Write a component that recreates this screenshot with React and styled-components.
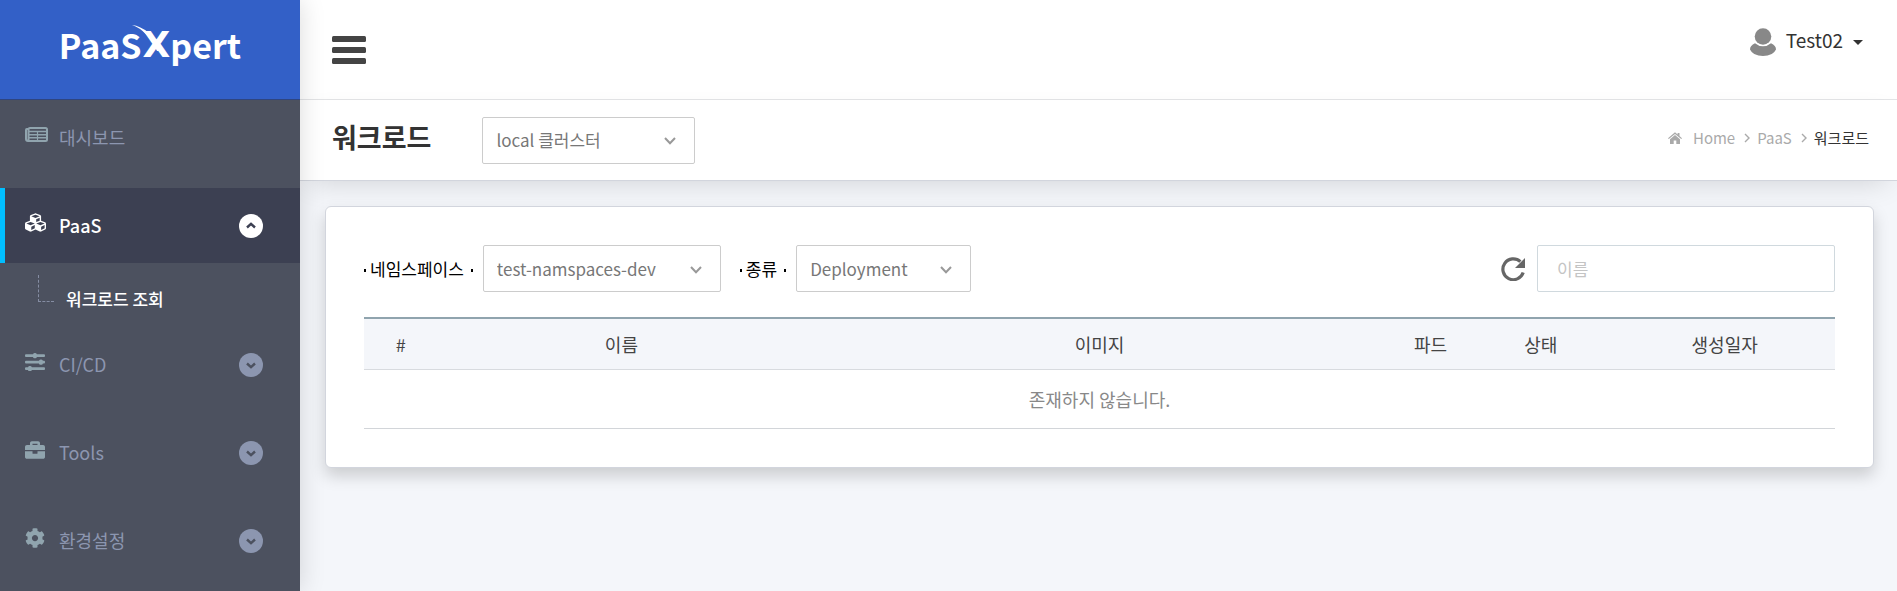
import React from "react";
import styled, { createGlobalStyle, css } from "styled-components";
import { FaBriefcase, FaCog, FaCubes } from "react-icons/fa";

const GlobalStyle = createGlobalStyle`
  *, *::before, *::after { box-sizing: border-box; }
  body {
    margin: 0;
    background: #f4f6fa;
    color: #333;
    font-family: "Noto Sans CJK KR", "Noto Sans", sans-serif;
    font-size: 17px;
    line-height: 24px;
  }
  button, input, select { font: inherit; color: inherit; }
  a { color: inherit; text-decoration: none; }
  ul, ol { margin: 0; padding: 0; list-style: none; }
`;

const Layout = styled.div`
  display: flex;
  min-height: 100vh;
`;

const Sidebar = styled.aside`
  position: relative;
  z-index: 1;
  flex: 0 0 300px;
  background: #4c515f;
  box-shadow: 0 0 24px rgba(0, 0, 0, 0.15);
`;

const Logo = styled.a`
  display: flex;
  justify-content: center;
  height: 100px;
  padding-top: 20px;
  border-bottom: 1px solid #2f4580;
  background: #3360c7;
  color: #fff;
  font-size: 34px;
  font-weight: 700;
  line-height: 50px;
`;

const LogoX = styled.span`
  position: relative;
  margin: 0 0 0 1px;
  font-family: "DejaVu Sans", sans-serif;
  font-size: 36px;
  font-weight: 700;
`;

const Swoosh = styled.svg`
  position: absolute;
  left: -11px;
  top: 4px;
  width: 32px;
  height: 30px;
`;

const MenuItem = styled.li`
  margin-bottom: 13px;
`;

const MenuLink = styled.a`
  display: flex;
  align-items: center;
  height: 75px;
  padding: 0 37px 0 20px;
  border-left: 5px solid transparent;
  color: #8c96b0;
  font-size: 18px;
  ${(p) =>
    p.$active &&
    css`
      border-left-color: #00bfff;
      background: #3c4052;
      color: #fff;
      font-weight: 500;
    `}
`;

const MenuIcon = styled.span`
  display: flex;
  width: 34px;
  padding-bottom: 6px;
  color: ${(p) => (p.$active ? "#fff" : "#90a4ae")};
  svg { display: block; }
`;

const MenuLabel = styled.span`
  padding-bottom: 2px;
`;

const Toggle = styled.svg`
  width: 24px;
  height: 24px;
  margin-left: auto;
`;

const SubMenu = styled.ul`
  padding: 12px 0 0 38px;
`;

const SubItem = styled.li`
  display: flex;
  height: 39px;
  color: #fff;
  font-size: 17px;
  font-weight: 500;
`;

const Branch = styled.span`
  width: 16px;
  height: 27px;
  margin-right: 12px;
  border: dashed #858da3;
  border-width: 0 0 1px 1px;
`;

const SubLink = styled.a`
  padding-top: 12px;
`;

const Main = styled.main`
  flex: 1;
  min-width: 0;
`;

const TopBar = styled.header`
  display: flex;
  justify-content: space-between;
  height: 100px;
  padding: 0 34px 0 32px;
  border-bottom: 1px solid #e4e5e7;
  background: #fff;
`;

const PlainButton = styled.button`
  display: flex;
  align-items: center;
  padding: 0;
  border: 0;
  background: none;
  cursor: pointer;
`;

const UserButton = styled(PlainButton)`
  align-self: flex-start;
  padding-top: 28px;
  color: #333;
  font-size: 19px;
`;

const UserName = styled.span`
  margin: 0 10px;
  padding-bottom: 4px;
`;

const PageHeader = styled.div`
  display: flex;
  align-items: center;
  height: 81px;
  padding: 0 28px 0 32px;
  border-bottom: 1px solid #d2d5dd;
  background: #fff;
  box-shadow: 0 10px 30px -10px rgba(0, 0, 0, 0.16);
`;

const Title = styled.h1`
  margin: 0 51px 6px 0;
  font-size: 27px;
  font-weight: 700;
  line-height: 40px;
`;

const SelectBox = styled.span`
  position: relative;
  flex: none;
  width: ${(p) => p.$width}px;
  svg {
    position: absolute;
    right: 19px;
    top: 50%;
    margin-top: -3px;
    pointer-events: none;
  }
  select {
    display: block;
    width: 100%;
    height: 47px;
    padding: 0 40px 0 13px;
    border: 1px solid #ccc;
    border-radius: 2px;
    background: #fff;
    color: #777;
    appearance: none;
  }
`;

const Crumbs = styled.ol`
  display: flex;
  align-items: center;
  margin-left: auto;
  padding-bottom: 5px;
  color: #aaa;
  font-size: 15px;
`;

const Crumb = styled.li`
  display: flex;
  align-items: center;
  gap: 9px;
  color: ${(p) => (p.$current ? "#333" : "inherit")};
  a { display: flex; align-items: center; gap: 11px; }
  svg { display: block; }
  & + & { margin-left: 7px; }
`;

const Card = styled.section`
  margin: 25px 23px 25px 25px;
  padding: 38px;
  border: 1px solid #d2d5dd;
  border-radius: 6px;
  background: #fff;
  box-shadow: 0 8px 16px rgba(0, 0, 0, 0.17);
`;

const Filters = styled.div`
  display: flex;
  align-items: center;
  margin-bottom: 25px;
`;

const FilterLabel = styled.label`
  display: flex;
  align-items: center;
  margin-right: 10px;
  color: #000;
  font-size: 17px;
  &::before, &::after {
    content: "";
    width: 2px;
    height: 3px;
    margin: 4px 0 0;
    background: currentColor;
  }
  &::before { margin-right: 4px; }
  &::after { margin-left: 7px; }
`;

const Spacer = styled.span`
  width: 19px;
`;

const Search = styled.div`
  display: flex;
  align-items: center;
  gap: 12px;
  margin-left: auto;
  input {
    width: 298px;
    height: 47px;
    padding: 0 19px;
    border: 1px solid #d0d9de;
    border-radius: 2px;
    outline: 0;
  }
  input::placeholder { color: #c4c4c4; opacity: 1; }
`;

const Table = styled.table`
  width: 100%;
  border-collapse: collapse;
  table-layout: fixed;
  font-size: 18px;
  text-align: center;
  th {
    height: 51px;
    padding: 0;
    border-top: 2px solid #90a4ae;
    border-bottom: 1px solid #d8dbdf;
    background: #f4f6fa;
    color: #444;
    font-weight: 400;
  }
  td {
    height: 59px;
    padding: 0;
    border-bottom: 1px solid #d2d5d9;
    color: #888;
  }
`;

const DashboardIcon = () => (
  <svg width="23" height="15" viewBox="0 0 23 15" fill="none" stroke="currentColor">
    <path d="M3.500 2H1.800Q1 2 1 3V12Q1 14 3 14H20.500Q22 14 22 12.500V2.500Q22 1 20.500 1H5Q3.500 1 3.500 2.500V13" strokeWidth="2" />
    <path d="M4 4.500H21M4 7.700H21M4 10.700H21" strokeWidth="1.400" />
    <path d="M12.500 5V13" strokeWidth="1.200" />
  </svg>
);

const SlidersIcon = () => (
  <svg width="20" height="18" viewBox="0 0 20 18" fill="currentColor">
    {[[2, 10], [8.5, 16], [15, 5]].map(([y, x]) => (
      <g key={y}>
        <rect x="0" y={y - 0.7} width="20" height="2.800" rx="1" />
        <rect x={x - 2} y={y - 2} width="3.800" height="5.200" rx="1.500" />
      </g>
    ))}
  </svg>
);

const ToggleIcon = ({ open }) => (
  <Toggle viewBox="0 0 24 24" fill="none" aria-hidden="true">
    <circle cx="12" cy="12" r="12" fill={open ? "#fff" : "#8c96b0"} />
    <path d={open ? "M8 13.500L12 9.800L16 13.500" : "M8 10.500L12 14.200L16 10.500"} stroke={open ? "#3c4052" : "#4c515f"} strokeWidth="2.400" />
  </Toggle>
);

const ChevronDown = () => (
  <svg width="12" height="8" viewBox="0 0 12 8" fill="none" aria-hidden="true">
    <path d="M1 1L6 6.300L11 1" stroke="#999" strokeWidth="2" />
  </svg>
);

const ChevronRight = () => (
  <svg width="6" height="10" viewBox="0 0 6 10" fill="none" aria-hidden="true">
    <path d="M1 1L5 5L1 9" stroke="currentColor" strokeWidth="1.400" />
  </svg>
);

const HomeIcon = () => (
  <svg width="14" height="12" viewBox="0 0 14 12" fill="currentColor" aria-hidden="true">
    <path d="M7 0.300L9.600 2.500V1H11.500V4.100L14 6.200L13.200 7.100L7 1.900L0.800 7.100L0 6.200Z" />
    <path d="M2 7.200L7 3L12 7.200V12H8.300V8.400H5.700V12H2Z" />
  </svg>
);

const MenuBars = () => (
  <svg width="34" height="28" viewBox="0 0 34 28" fill="#444" aria-hidden="true">
    <rect width="34" height="6" rx="1.500" />
    <rect y="11" width="34" height="6" rx="1.500" />
    <rect y="22" width="34" height="6" rx="1.500" />
  </svg>
);

const UserIcon = () => (
  <svg width="26" height="28" viewBox="0 0 26 28" fill="#888" aria-hidden="true">
    <circle cx="13" cy="8.500" r="8.300" />
    <path d="M5 15.300Q8.500 18.300 13 18.300Q17.500 18.300 21 15.300Q26 17.500 26 21.500Q23 28 13 28Q3 28 0 21.500Q0 17.500 5 15.300Z" />
  </svg>
);

const RefreshIcon = () => (
  <svg width="24" height="24" viewBox="0 0 24 24" fill="none" aria-hidden="true">
    <path d="M22.200 15.500A10.400 10.400 0 1 1 19.400 4.700" stroke="#666" strokeWidth="3.200" />
    <path d="M24 1V11H14Z" fill="#666" />
  </svg>
);

const menu = [
  { label: "대시보드", icon: <DashboardIcon /> },
  { label: "PaaS", icon: <FaCubes size={21} />, active: true, toggle: true, children: ["워크로드 조회"] },
  { label: "CI/CD", icon: <SlidersIcon />, toggle: true },
  { label: "Tools", icon: <FaBriefcase size={20} />, toggle: true },
  { label: "환경설정", icon: <FaCog size={20} />, toggle: true },
];

const columns = [
  ["#", "5%"],
  ["이름", "25%"],
  ["이미지", "40%"],
  ["파드", "5%"],
  ["상태", "10%"],
  ["생성일자", "15%"],
];

const Select = ({ id, width, label, option }) => (
  <SelectBox $width={width}>
    <select id={id} aria-label={label}>
      <option>{option}</option>
    </select>
    <ChevronDown />
  </SelectBox>
);

export default function App() {
  return (
    <>
      <GlobalStyle />
      <Layout>
        <Sidebar>
          <Logo href="#">
            <span>PaaS</span>
            <LogoX>
              X
              <Swoosh viewBox="0 0 32 30" aria-hidden="true">
                <path d="M0 1Q17 3 31 27L25 27Q15 6 0 1Z" fill="#fff" />
              </Swoosh>
            </LogoX>
            <span>pert</span>
          </Logo>
          <nav>
            <ul>
              {menu.map((item) => (
                <MenuItem key={item.label}>
                  <MenuLink href="#" $active={item.active}>
                    <MenuIcon $active={item.active}>{item.icon}</MenuIcon>
                    <MenuLabel>{item.label}</MenuLabel>
                    {item.toggle && <ToggleIcon open={item.active} />}
                  </MenuLink>
                  {item.children && (
                    <SubMenu>
                      {item.children.map((child) => (
                        <SubItem key={child}>
                          <Branch />
                          <SubLink href="#">{child}</SubLink>
                        </SubItem>
                      ))}
                    </SubMenu>
                  )}
                </MenuItem>
              ))}
            </ul>
          </nav>
        </Sidebar>
        <Main>
          <TopBar>
            <PlainButton aria-label="메뉴">
              <MenuBars />
            </PlainButton>
            <UserButton>
              <UserIcon />
              <UserName>Test02</UserName>
              <svg width="10" height="5" viewBox="0 0 10 5" aria-hidden="true">
                <path d="M0 0H10L5 5Z" fill="#333" />
              </svg>
            </UserButton>
          </TopBar>
          <PageHeader>
            <Title>워크로드</Title>
            <Select id="cluster" label="클러스터" width={213} option="local 클러스터" />
            <Crumbs>
              <Crumb>
                <a href="#"><HomeIcon />Home</a>
                <ChevronRight />
              </Crumb>
              <Crumb>
                <a href="#">PaaS</a>
                <ChevronRight />
              </Crumb>
              <Crumb $current>워크로드</Crumb>
            </Crumbs>
          </PageHeader>
          <Card>
            <Filters>
              <FilterLabel htmlFor="namespace">네임스페이스</FilterLabel>
              <Select id="namespace" width={238} option="test-namspaces-dev" />
              <Spacer />
              <FilterLabel htmlFor="kind">종류</FilterLabel>
              <Select id="kind" width={175} option="Deployment" />
              <Search>
                <PlainButton aria-label="새로고침">
                  <RefreshIcon />
                </PlainButton>
                <input type="text" placeholder="이름" aria-label="이름" />
              </Search>
            </Filters>
            <Table>
              <colgroup>
                {columns.map(([name, width]) => (
                  <col key={name} width={width} />
                ))}
              </colgroup>
              <thead>
                <tr>
                  {columns.map(([name]) => (
                    <th key={name} scope="col">{name}</th>
                  ))}
                </tr>
              </thead>
              <tbody>
                <tr>
                  <td colSpan={columns.length}>존재하지 않습니다.</td>
                </tr>
              </tbody>
            </Table>
          </Card>
        </Main>
      </Layout>
    </>
  );
}
